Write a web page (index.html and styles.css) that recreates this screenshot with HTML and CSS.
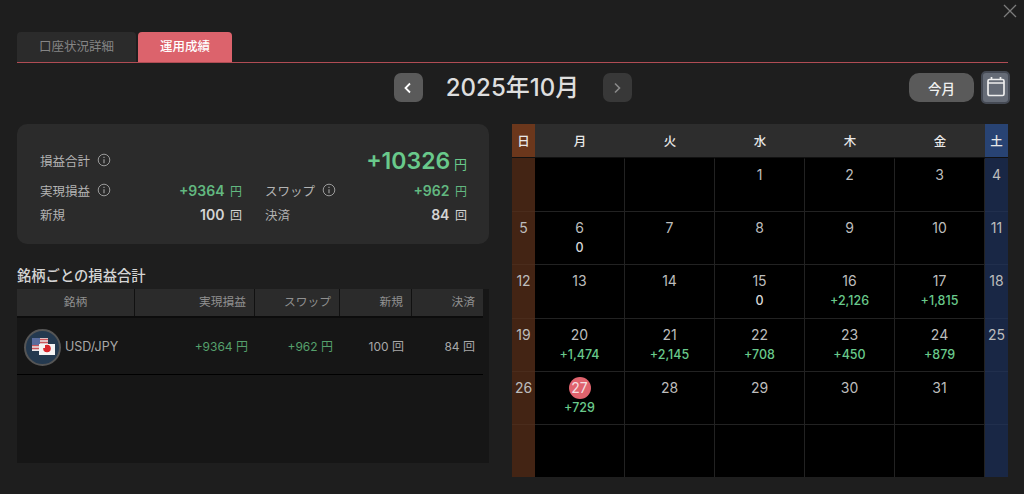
FILE: index.html
```html
<!DOCTYPE html>
<html lang="ja">
<head>
    <meta charset="UTF-8">
    <meta name="viewport" content="width=device-width, initial-scale=1.0">
    <title>運用成績</title>
    <link rel="stylesheet" href="styles.css">
</head>
<body>

<div class="modal">
    <div class="close-row">
        <button class="close-btn" aria-label="閉じる">
            <svg width="14" height="14" viewBox="0 0 14 14"><path d="M1 1L13 13M13 1L1 13" stroke="#7c7c7c" stroke-width="1.3" fill="none"/></svg>
        </button>
    </div>

    <div class="tabs">
        <div class="tab">口座状況詳細</div>
        <div class="tab active">運用成績</div>
    </div>

    <div class="month-bar">
        <div></div>
        <div class="month-nav">
            <button class="nav-btn">
                <svg width="10" height="12" viewBox="0 0 10 12"><path d="M7 1.5L2.5 6L7 10.5" stroke="#fff" stroke-width="1.8" fill="none"/></svg>
            </button>
            <h1 class="month-title">2025年10月</h1>
            <button class="nav-btn disabled">
                <svg width="10" height="12" viewBox="0 0 10 12"><path d="M3 1.5L7.5 6L3 10.5" stroke="#8a8a8a" stroke-width="1.6" fill="none"/></svg>
            </button>
        </div>
        <div class="month-tools">
            <button class="today-btn">今月</button>
            <button class="cal-btn">
                <svg width="20" height="21" viewBox="0 0 20 21"><rect x="2" y="2.5" width="16" height="16" rx="1.5" stroke="#eee" stroke-width="1.7" fill="none"/><path d="M2 6H18M5.5 0V2.5M14.5 0V2.5" stroke="#eee" stroke-width="1.7" fill="none"/></svg>
            </button>
        </div>
    </div>

    <div class="main">
        <div class="left">
            <section class="summary">
                <div class="summary-top">
                    <span class="label">損益合計
                        <svg class="info" width="14" height="14" viewBox="0 0 14 14"><circle cx="7" cy="7" r="5.8" stroke="#9a9a9a" fill="none"/><path d="M7 6.2V10.2M7 3.8V5" stroke="#9a9a9a" stroke-width="1.2"/></svg>
                    </span>
                    <span class="total plus">+10326 <small>円</small></span>
                </div>
                <div class="summary-grid">
                    <div class="summary-item">
                        <span class="label">実現損益
                            <svg class="info" width="14" height="14" viewBox="0 0 14 14"><circle cx="7" cy="7" r="5.8" stroke="#9a9a9a" fill="none"/><path d="M7 6.2V10.2M7 3.8V5" stroke="#9a9a9a" stroke-width="1.2"/></svg>
                        </span>
                        <span class="amount plus">+9364 <small>円</small></span>
                    </div>
                    <div class="summary-item">
                        <span class="label">スワップ
                            <svg class="info" width="14" height="14" viewBox="0 0 14 14"><circle cx="7" cy="7" r="5.8" stroke="#9a9a9a" fill="none"/><path d="M7 6.2V10.2M7 3.8V5" stroke="#9a9a9a" stroke-width="1.2"/></svg>
                        </span>
                        <span class="amount plus">+962 <small>円</small></span>
                    </div>
                    <div class="summary-item">
                        <span class="label">新規</span>
                        <span class="amount">100 <small>回</small></span>
                    </div>
                    <div class="summary-item">
                        <span class="label">決済</span>
                        <span class="amount">84 <small>回</small></span>
                    </div>
                </div>
            </section>

            <h2 class="section-title">銘柄ごとの損益合計</h2>
            <div class="symbol-table">
                <div class="t-row t-head">
                    <div class="center">銘柄</div>
                    <div>実現損益</div>
                    <div>スワップ</div>
                    <div>新規</div>
                    <div>決済</div>
                </div>
                <div class="t-row t-body">
                    <div class="symbol">
                        <span class="flag-icon">
                            <svg width="36" height="36" viewBox="0 0 36 36">
                                <rect x="7" y="9" width="16" height="13" fill="#e8e4e6"/>
                                <path d="M7 10.5H23M7 13.5H23M7 16.5H23M7 19.5H23" stroke="#c9545a" stroke-width="1.4"/>
                                <rect x="7" y="9" width="8" height="7" fill="#5a6c9c"/>
                                <path d="M14 15H30V26H14Z" fill="#f4f4f4"/>
                                <circle cx="22" cy="19.5" r="3.8" fill="#d8262c"/>
                                <path d="M14 15H20V19H14Z" fill="#f4f4f4"/>
                            </svg>
                        </span>
                        USD/JPY
                    </div>
                    <div class="plus-soft">+9364 円</div>
                    <div class="plus-soft">+962 円</div>
                    <div>100 回</div>
                    <div>84 回</div>
                </div>
            </div>
        </div>

        <div class="calendar">
            <div class="dow sun">日</div>
            <div class="dow">月</div>
            <div class="dow">火</div>
            <div class="dow">水</div>
            <div class="dow">木</div>
            <div class="dow">金</div>
            <div class="dow sat">土</div>

            <div class="day sun"></div>
            <div class="day"></div>
            <div class="day"></div>
            <div class="day"><span class="num">1</span></div>
            <div class="day"><span class="num">2</span></div>
            <div class="day"><span class="num">3</span></div>
            <div class="day sat"><span class="num">4</span></div>

            <div class="day sun"><span class="num">5</span></div>
            <div class="day"><span class="num">6</span><span class="val">0</span></div>
            <div class="day"><span class="num">7</span></div>
            <div class="day"><span class="num">8</span></div>
            <div class="day"><span class="num">9</span></div>
            <div class="day"><span class="num">10</span></div>
            <div class="day sat"><span class="num">11</span></div>

            <div class="day sun"><span class="num">12</span></div>
            <div class="day"><span class="num">13</span></div>
            <div class="day"><span class="num">14</span></div>
            <div class="day"><span class="num">15</span><span class="val">0</span></div>
            <div class="day"><span class="num">16</span><span class="val plus">+2,126</span></div>
            <div class="day"><span class="num">17</span><span class="val plus">+1,815</span></div>
            <div class="day sat"><span class="num">18</span></div>

            <div class="day sun"><span class="num">19</span></div>
            <div class="day"><span class="num">20</span><span class="val plus">+1,474</span></div>
            <div class="day"><span class="num">21</span><span class="val plus">+2,145</span></div>
            <div class="day"><span class="num">22</span><span class="val plus">+708</span></div>
            <div class="day"><span class="num">23</span><span class="val plus">+450</span></div>
            <div class="day"><span class="num">24</span><span class="val plus">+879</span></div>
            <div class="day sat"><span class="num">25</span></div>

            <div class="day sun"><span class="num">26</span></div>
            <div class="day"><span class="num today">27</span><span class="val plus">+729</span></div>
            <div class="day"><span class="num">28</span></div>
            <div class="day"><span class="num">29</span></div>
            <div class="day"><span class="num">30</span></div>
            <div class="day"><span class="num">31</span></div>
            <div class="day sat"></div>

            <div class="day sun"></div>
            <div class="day"></div>
            <div class="day"></div>
            <div class="day"></div>
            <div class="day"></div>
            <div class="day"></div>
            <div class="day sat"></div>
        </div>
    </div>
</div>

</body>
</html>
```

FILE: styles.css
```css
* {
    box-sizing: border-box;
}

body {
    margin: 0;
    height: 494px;
    overflow: hidden;
    background-color: #1e1e1e;
    color: #d8d8d8;
    font-family: Inter, "Noto Sans CJK JP", sans-serif;
}

button {
    border: none;
    padding: 0;
    font-family: inherit;
    cursor: pointer;
}

.modal {
    padding: 0 16px 0 17px;
}

.close-row {
    display: flex;
    justify-content: flex-end;
    height: 32px;
    margin-right: -9px;
    padding-top: 4px;
}

.close-btn {
    width: 14px;
    height: 14px;
    background: none;
}

/* tabs */
.tabs {
    display: flex;
    gap: 2px;
    height: 31px;
    border-bottom: 1px solid #b04c54;
}

.tab {
    width: 119px;
    height: 30px;
    line-height: 30px;
    text-align: center;
    font-size: 12.5px;
    color: #858585;
    background-color: #2b2b2b;
    border-radius: 4px 4px 0 0;
}

.tab.active {
    width: 94px;
    color: #fff;
    font-weight: 500;
    background-color: #dc636c;
}

/* month header */
.month-bar {
    display: grid;
    grid-template-columns: 1fr auto 1fr;
    align-items: center;
    height: 29px;
    margin-top: 10px;
}

.month-nav {
    display: flex;
    align-items: center;
    gap: 22px;
}

.month-title {
    margin: 0;
    width: 136px;
    text-align: center;
    font-size: 24px;
    font-weight: 500;
    line-height: 29px;
    color: #dedede;
    white-space: nowrap;
}

.nav-btn {
    display: flex;
    align-items: center;
    justify-content: center;
    width: 29px;
    height: 29px;
    border-radius: 7px;
    background-color: #5a5a5a;
}

.nav-btn.disabled {
    background-color: #383838;
}

.month-tools {
    display: flex;
    justify-content: flex-end;
    align-items: center;
    gap: 7px;
    margin: -2px -2px -2px 0;
}

.today-btn {
    width: 65px;
    height: 29px;
    border-radius: 10px;
    background-color: #5a5a5a;
    color: #f0f0f0;
    font-size: 13.5px;
    font-weight: 500;
}

.cal-btn {
    display: flex;
    align-items: center;
    justify-content: center;
    width: 29px;
    height: 33px;
    border-radius: 5px;
    background-color: #656b76;
    border: 2px solid #454a54;
}

/* main columns */
.main {
    display: grid;
    grid-template-columns: 472px 496px;
    gap: 23px;
    margin-top: 22px;
}

.summary {
    height: 120px;
    padding: 22px 22px 0 23px;
    border-radius: 10px;
    background-color: #2b2b2b;
}

.summary-top {
    display: flex;
    justify-content: space-between;
    align-items: center;
    height: 28px;
}

.label {
    display: inline-flex;
    align-items: center;
    gap: 7px;
    font-size: 12.5px;
    color: #b4b4b4;
    white-space: nowrap;
}

.info {
    flex: none;
}

.total {
    margin-top: 5px;
    font-size: 23px;
    font-weight: 600;
    line-height: 28px;
}

.total small {
    margin-left: -2px;
    font-size: 13px;
    font-weight: 400;
}

.amount small {
    margin-left: 2px;
    font-size: 12px;
    font-weight: 400;
}

.plus {
    color: #69c98b;
}

.summary-grid {
    display: grid;
    grid-template-columns: 202px 202px;
    column-gap: 23px;
    margin-top: 4px;
}

.summary-item {
    display: flex;
    justify-content: space-between;
    align-items: center;
    height: 24px;
}

.amount {
    font-size: 14px;
    font-weight: 600;
    color: #d4d4d4;
}

.amount.plus {
    color: #62b880;
}

.section-title {
    margin: 22px 0 3px;
    height: 20px;
    font-size: 14.3px;
    font-weight: 500;
    line-height: 20px;
    color: #d4d4d4;
}

/* symbol table */
.symbol-table {
    height: 174px;
    background-color: #161616;
}

.t-row {
    display: grid;
    grid-template-columns: 118px 120px 85px 72px 71px;
    width: 466px;
    font-size: 12px;
}

.t-row > div {
    padding-right: 8px;
    text-align: right;
}

.t-head {
    height: 29px;
    background-color: #2b2b2b;
    border-bottom: 2px solid #0c0c0c;
    color: #909090;
    font-size: 11.75px;
    line-height: 27px;
}

.t-head > div {
    border-right: 1px solid #111;
}

.t-head > div:last-child {
    border-right: none;
}

.t-head > .center {
    padding-right: 0;
    text-align: center;
}

.t-body {
    height: 57px;
    border-bottom: 1px solid #000;
    line-height: 58px;
    color: #a8a8a8;
}

.t-body > .symbol {
    display: flex;
    align-items: center;
    gap: 4px;
    padding: 0 0 0 7px;
    font-size: 12.5px;
    text-align: left;
}

.flag-icon {
    display: flex;
    align-items: center;
    justify-content: center;
    width: 37px;
    height: 37px;
    border: 2px solid #555;
    border-radius: 50%;
    background-color: #24394f;
    overflow: hidden;
}

.flag-icon svg {
    flex: none;
}

.t-row > .plus-soft {
    padding-right: 7px;
    color: #55a06c;
}

/* calendar */
.calendar {
    display: grid;
    grid-template-columns: 23px repeat(5, 90px) 23px;
    grid-template-rows: 34px repeat(6, 1fr);
    height: 353px;
}

.dow {
    display: flex;
    align-items: center;
    justify-content: center;
    background-color: #2d2d2d;
    border-bottom: 1px solid #111;
    font-size: 12.5px;
    font-weight: 500;
    color: #e8e8e8;
}

.dow.sun {
    background-color: #6b371c;
}

.dow.sat {
    background-color: #284373;
}

.day {
    display: flex;
    flex-direction: column;
    align-items: center;
    padding-top: 5px;
    background-color: #000;
    border-right: 1px solid #222;
    border-top: 1px solid #222;
}

.day:nth-child(-n+14) {
    border-top-color: #000;
}

.day.sun {
    background-color: #432414;
    border-right: none;
    border-top-color: #4a2c1c;
}

.day.sat {
    background-color: #192745;
    border-right: none;
    border-top-color: #212f4d;
}

.day.sun:nth-child(-n+14) {
    border-top-color: #432414;
}

.day.sat:nth-child(-n+14) {
    border-top-color: #192745;
}

.num {
    height: 22px;
    min-width: 22px;
    border-radius: 50%;
    font-size: 14px;
    line-height: 22px;
    text-align: center;
    color: #bdbdbd;
}

.num.today {
    background-color: #e0636d;
    color: #f6dfe1;
}

.val {
    margin-top: -1px;
    height: 20px;
    font-size: 12.5px;
    font-weight: 500;
    line-height: 20px;
    color: #d8d8d8;
}

.val.plus {
    color: #69c98b;
}
```
